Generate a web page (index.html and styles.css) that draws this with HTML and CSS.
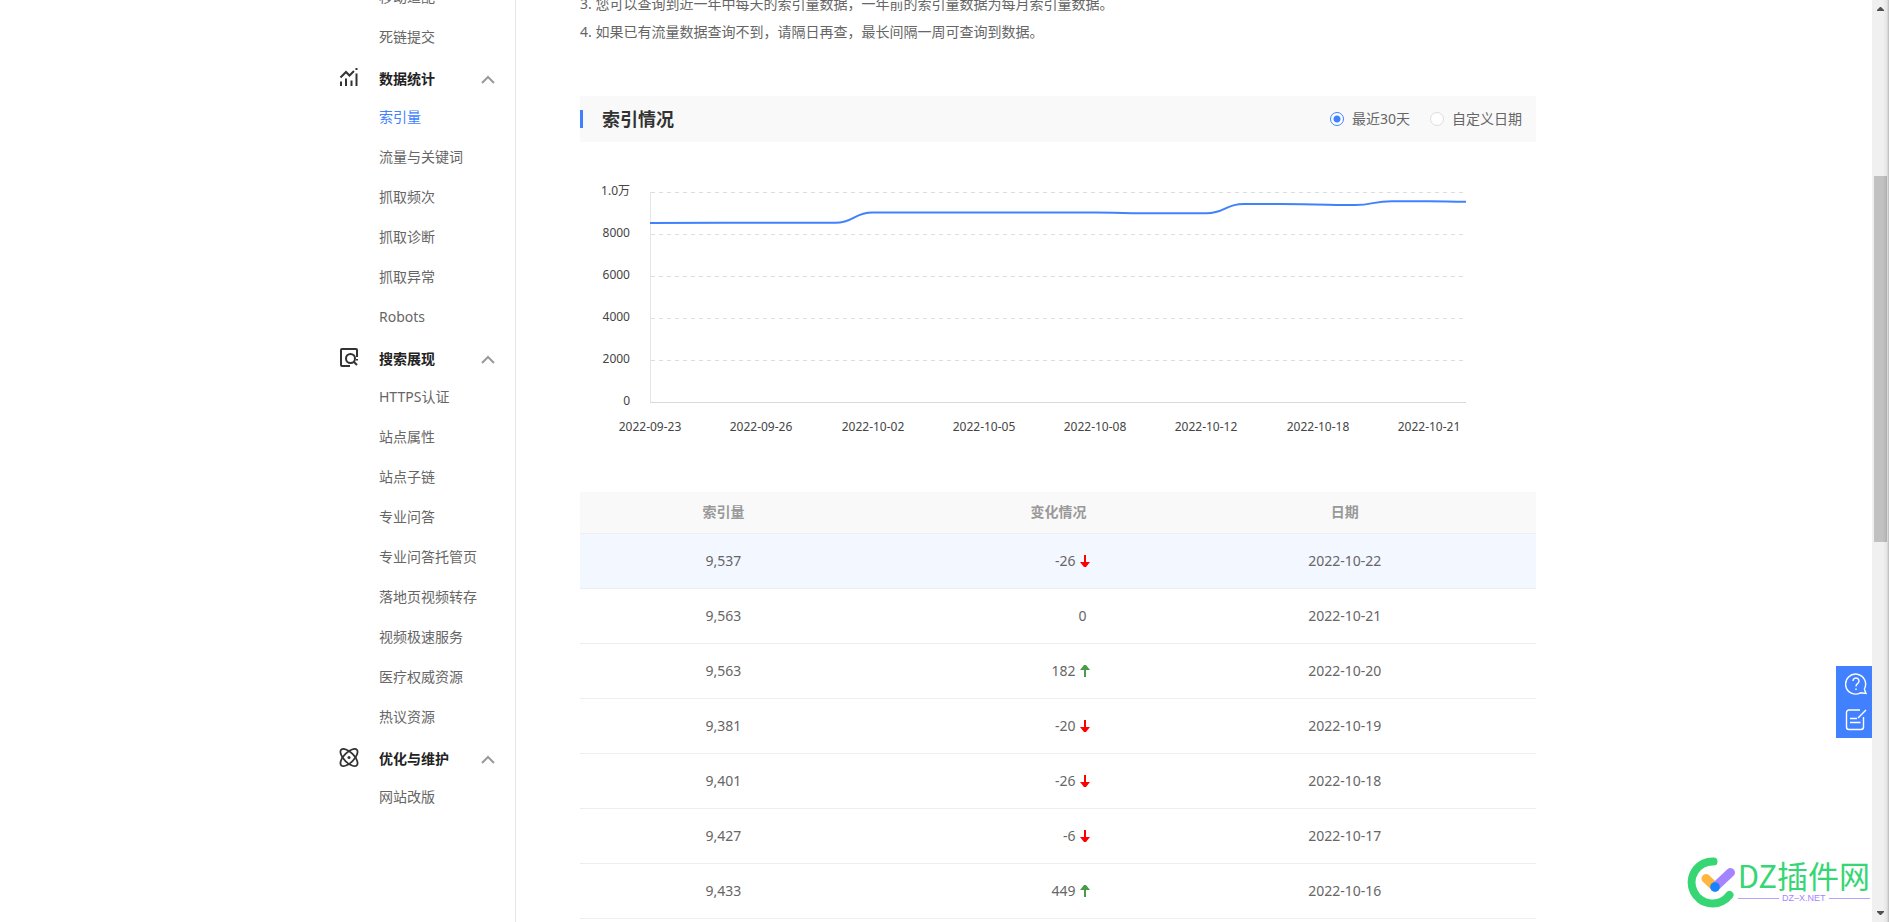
FILE: index.html
```html
<!DOCTYPE html>
<html lang="zh-CN">
<head>
<meta charset="utf-8">
<title>索引量</title>
<link rel="stylesheet" href="styles.css">
</head>
<body>
<div class="viewport">
  <div class="container">
    <nav class="sidebar">
      <a class="nav-item" href="#">移动适配</a>
      <a class="nav-item" href="#">死链提交</a>
      <button class="nav-group" type="button">
        <svg class="nav-icon" viewBox="0 0 20 20"><path d="M1.500 9.500 7 4l3.500 3.500L15 3"/><path d="M2 13.500V18M7 10.500V18M12.500 12.500V18M17.500 5.500V18M16.500 1h2"/></svg>
        <span>数据统计</span>
        <svg class="chevron" viewBox="0 0 14 9"><path d="M1 8 7 2l6 6"/></svg>
      </button>
      <a class="nav-item active" href="#">索引量</a>
      <a class="nav-item" href="#">流量与关键词</a>
      <a class="nav-item" href="#">抓取频次</a>
      <a class="nav-item" href="#">抓取诊断</a>
      <a class="nav-item" href="#">抓取异常</a>
      <a class="nav-item" href="#">Robots</a>
      <button class="nav-group" type="button">
        <svg class="nav-icon" viewBox="0 0 20 20"><path d="M11 18H3a1 1 0 0 1-1-1V2a1 1 0 0 1 1-1h14a1 1 0 0 1 1 1v7M18 11v1.500"/><circle cx="11.500" cy="10.500" r="4.500"/><path d="m14.500 13.500 3.500 3.500"/></svg>
        <span>搜索展现</span>
        <svg class="chevron" viewBox="0 0 14 9"><path d="M1 8 7 2l6 6"/></svg>
      </button>
      <a class="nav-item" href="#">HTTPS认证</a>
      <a class="nav-item" href="#">站点属性</a>
      <a class="nav-item" href="#">站点子链</a>
      <a class="nav-item" href="#">专业问答</a>
      <a class="nav-item" href="#">专业问答托管页</a>
      <a class="nav-item" href="#">落地页视频转存</a>
      <a class="nav-item" href="#">视频极速服务</a>
      <a class="nav-item" href="#">医疗权威资源</a>
      <a class="nav-item" href="#">热议资源</a>
      <button class="nav-group" type="button">
        <svg class="nav-icon" viewBox="0 0 20 20"><ellipse cx="10" cy="9.500" rx="11" ry="5" transform="rotate(45 10 9.500)"/><ellipse cx="10" cy="9.500" rx="11" ry="5" transform="rotate(-45 10 9.500)"/><circle class="dot" cx="10" cy="9.500" r="1.500"/></svg>
        <span>优化与维护</span>
        <svg class="chevron" viewBox="0 0 14 9"><path d="M1 8 7 2l6 6"/></svg>
      </button>
      <a class="nav-item" href="#">网站改版</a>
    </nav>

    <main class="main">
      <div class="notes">
        <p>3. 您可以查询到近一年中每天的索引量数据，一年前的索引量数据为每月索引量数据。</p>
        <p>4. 如果已有流量数据查询不到，请隔日再查，最长间隔一周可查询到数据。</p>
      </div>

      <header class="section-head">
        <h2>索引情况</h2>
        <div class="range">
          <label><input type="radio" name="range" checked>最近30天</label>
          <label><input type="radio" name="range">自定义日期</label>
        </div>
      </header>

      <svg class="chart" viewBox="0 0 956 350" role="img" aria-label="索引量趋势">
        <g class="grid">
          <path d="M71 50.500H884M71 92.500H884M71 134.500H884M71 176.500H884M71 218.500H884"/>
        </g>
        <path class="axis-y" d="M70.500 50V260"/>
        <path class="axis-x" d="M70 260.500H886"/>
        <g class="label-y">
          <text x="50" y="53">1.0万</text>
          <text x="50" y="95">8000</text>
          <text x="50" y="137">6000</text>
          <text x="50" y="179">4000</text>
          <text x="50" y="221">2000</text>
          <text x="50" y="263">0</text>
        </g>
        <g class="label-x">
          <text x="70" y="289">2022-09-23</text>
          <text x="181" y="289">2022-09-26</text>
          <text x="293" y="289">2022-10-02</text>
          <text x="404" y="289">2022-10-05</text>
          <text x="515" y="289">2022-10-08</text>
          <text x="626" y="289">2022-10-12</text>
          <text x="738" y="289">2022-10-18</text>
          <text x="849" y="289">2022-10-21</text>
        </g>
        <path class="series" d="M70 81C107 81 144 80.800 181 80.700H255.500C274 80.700 274 70.500 292.500 70.500H515C534 70.500 534 71.200 552 71.200H626.500C645 71.200 645 62 663.500 62H700C738 62.200 756 63 775 63C793 63 793 59.200 812 59.200H849C867 59.200 867 59.700 886 59.700"/>
      </svg>

      <table class="data">
        <thead>
          <tr><th>索引量</th><th class="change">变化情况</th><th>日期</th></tr>
        </thead>
        <tbody>
          <tr class="current"><td>9,537</td><td class="change">-26<svg class="arrow down" viewBox="0 0 10 12"><path d="M4 0h2v7h4L6 12H4L0 7h4z"/></svg></td><td>2022-10-22</td></tr>
          <tr><td>9,563</td><td class="change">0</td><td>2022-10-21</td></tr>
          <tr><td>9,563</td><td class="change">182<svg class="arrow up" viewBox="0 0 10 12"><path d="M4 12h2V5h4L6 0H4L0 5h4z"/></svg></td><td>2022-10-20</td></tr>
          <tr><td>9,381</td><td class="change">-20<svg class="arrow down" viewBox="0 0 10 12"><path d="M4 0h2v7h4L6 12H4L0 7h4z"/></svg></td><td>2022-10-19</td></tr>
          <tr><td>9,401</td><td class="change">-26<svg class="arrow down" viewBox="0 0 10 12"><path d="M4 0h2v7h4L6 12H4L0 7h4z"/></svg></td><td>2022-10-18</td></tr>
          <tr><td>9,427</td><td class="change">-6<svg class="arrow down" viewBox="0 0 10 12"><path d="M4 0h2v7h4L6 12H4L0 7h4z"/></svg></td><td>2022-10-17</td></tr>
          <tr><td>9,433</td><td class="change">449<svg class="arrow up" viewBox="0 0 10 12"><path d="M4 12h2V5h4L6 0H4L0 5h4z"/></svg></td><td>2022-10-16</td></tr>
        </tbody>
      </table>
    </main>
  </div>

  <div class="tools">
    <button type="button" aria-label="帮助"><svg viewBox="0 0 22 22"><path d="M19.300 16A10 10 0 1 0 15.500 19.800l5.500.7-1.700-4.500"/><path d="M8 8a3 3 0 1 1 4.500 2.600c-1.100.7-1.500 1.200-1.500 2.900M11 15.500v1.500"/></svg></button>
    <button type="button" aria-label="反馈"><svg viewBox="0 0 22 22"><path d="M15 1H4a2.500 2.500 0 0 0-2.500 2.500v14.500A2.500 2.500 0 0 0 4 20.500h12a2.500 2.500 0 0 0 2.500-2.500V8M5 9.500h7M5 13.500h10.500M13 9l8-8"/></svg></button>
  </div>

  <div class="brand">
    <svg class="brand-mark" viewBox="0 0 50 52"><path class="ring" d="M26.500 5.500A21 21 0 1 0 42.500 39"/><path class="tick-a" d="m19 22.500 9 8.500"/><path class="tick-b" d="M28 31 43.500 16.500"/><circle class="tick-c" cx="28" cy="31" r="4.800"/></svg>
    <div class="brand-text">
      <span class="brand-name">DZ插件网</span>
      <span class="brand-url">DZ–X.NET</span>
    </div>
  </div>
</div>

<div class="scrollbar" aria-hidden="true">
  <svg class="scroll-arrow" viewBox="0 0 7 4"><path d="M3 0h1l3 3v1H0V3z"/></svg>
  <div class="thumb"></div>
  <svg class="scroll-arrow" viewBox="0 0 7 4"><path d="M3 4h1l3-3V0H0v1z"/></svg>
</div>
</body>
</html>
```
FILE: styles.css
```css
* { box-sizing: border-box; }

body {
  margin: 0;
  display: flex;
  height: 100vh;
  overflow: hidden;
  background: #fff;
  color: #666;
  font: 14px/20px "Noto Sans", "Noto Sans CJK SC", sans-serif;
}

a { color: inherit; text-decoration: none; }
svg { display: block; fill: none; }
button { border: 0; padding: 0; background: none; font: inherit; color: inherit; cursor: pointer; }

.viewport { flex: 1; position: relative; overflow: hidden; }

.container {
  display: flex;
  max-width: 1200px;
  min-height: 100vh;
  margin: 0 auto;
}

/* Sidebar */
.sidebar {
  flex: 0 0 180px;
  margin-top: -23px;
  border-right: 1px solid #e6e6e6;
}

.nav-item {
  display: block;
  padding-left: 43px;
  line-height: 40px;
}
.nav-item.active { color: #4081ff; }

.nav-group {
  display: flex;
  align-items: center;
  width: 100%;
  height: 40px;
  padding: 4px 20px 0 3px;
  color: #222;
  font-weight: 700;
}
.nav-icon {
  width: 20px;
  height: 20px;
  margin-right: 20px;
  margin-bottom: 2px;
  stroke: #333;
  stroke-width: 2;
}
.nav-icon .dot { fill: #333; stroke: none; }
.nav-icon ellipse { stroke-width: 1.8; }
.chevron {
  width: 14px;
  height: 9px;
  margin-left: auto;
  stroke: #999;
  stroke-width: 2;
}

/* Main column */
.main { flex: 1; padding-left: 64px; }

.notes { margin-top: -10px; margin-bottom: 50px; }
.notes p { margin: 0; line-height: 28px; }

.section-head {
  display: flex;
  align-items: center;
  justify-content: space-between;
  height: 46px;
  padding-right: 14px;
  background: #f9f9f9;
}
.section-head h2 {
  margin: 0;
  padding-left: 19px;
  border-left: 3px solid #4081ff;
  color: #333;
  font-size: 18px;
  line-height: 18px;
}

.range { display: flex; gap: 20px; }
.range label { display: flex; align-items: center; gap: 8px; }
.range input {
  appearance: none;
  width: 14px;
  height: 14px;
  margin: 0;
  border: 1px solid #ddd;
  border-radius: 50%;
  background: #fff;
}
.range input:checked {
  border-color: #4081ff;
  background: radial-gradient(circle, #4081ff 3px, #fff 4px);
}

/* Chart */
.chart { width: 100%; }
.chart text { fill: #444; font-size: 12px; }
.grid { stroke: #ddd; stroke-dasharray: 4 4; }
.axis-y { stroke: #e6e6e6; }
.axis-x { stroke: #d9d9d9; }
.series { stroke: #4081ff; stroke-width: 2; }
.label-y { text-anchor: end; }
.label-x { text-anchor: middle; }

/* Table */
.data { width: 100%; border-collapse: collapse; table-layout: fixed; text-align: center; }
.data th { height: 41px; padding: 0; background: #f9f9f9; color: #999; }
.data td { height: 55px; padding: 0; }
.data th:nth-child(-n+2) { width: 30%; }
.data tr { border-bottom: 1px solid #eee; }
.data .current { background: #f3f7ff; }
.data .change { padding-right: 67px; text-align: right; }
.arrow { display: inline-block; width: 10px; height: 12px; margin: 0 -3px 0 4px; vertical-align: -1px; }
.down { fill: #f00; }
.up { fill: #4a9b47; }

/* Floating tools */
.tools {
  position: absolute;
  right: 0;
  bottom: 184px;
  display: flex;
  flex-direction: column;
  background: #4181ff;
}
.tools button { display: grid; place-items: center; width: 36px; height: 36px; padding-left: 3px; }
.tools svg { width: 22px; height: 22px; stroke: #fff; stroke-width: 1.4; }

/* Brand badge */
.brand {
  position: absolute;
  right: 2px;
  bottom: 14px;
  display: flex;
  align-items: flex-start;
  gap: 1px;
}
.brand-mark { width: 50px; height: 52px; stroke-linecap: round; }
.ring { stroke: #35d673; stroke-width: 8; }
.tick-a { stroke: #ffb63c; stroke-width: 9; }
.tick-b { stroke: #a584ff; stroke-width: 9; }
.tick-c { fill: #1684ff; }
.brand-text { display: flex; flex-direction: column; }
.brand-name {
  color: #35d673;
  font: 400 31px/37px "Noto Sans CJK SC", sans-serif;
}
.brand-url {
  display: flex;
  align-items: center;
  gap: 3px;
  color: #a584ff;
  font: 9px/10px "Liberation Sans", sans-serif;
}
.brand-url::before,
.brand-url::after { content: ""; flex: 1; height: 1px; background: #b9a2ff; }

/* Scrollbar */
.scrollbar {
  display: flex;
  flex-direction: column;
  align-items: center;
  width: 17px;
  padding: 7px 0;
  background: linear-gradient(to right, #f0f0f0 11px, #e4e4e4 15px, #b8b8b8);
}
.scroll-arrow { width: 7px; height: 4px; fill: #505050; }
.thumb {
  width: 13px;
  height: 366px;
  margin: 165px 0 auto;
  background: linear-gradient(to right, #c1c1c1 9px, #b0b0b0);
}
```
